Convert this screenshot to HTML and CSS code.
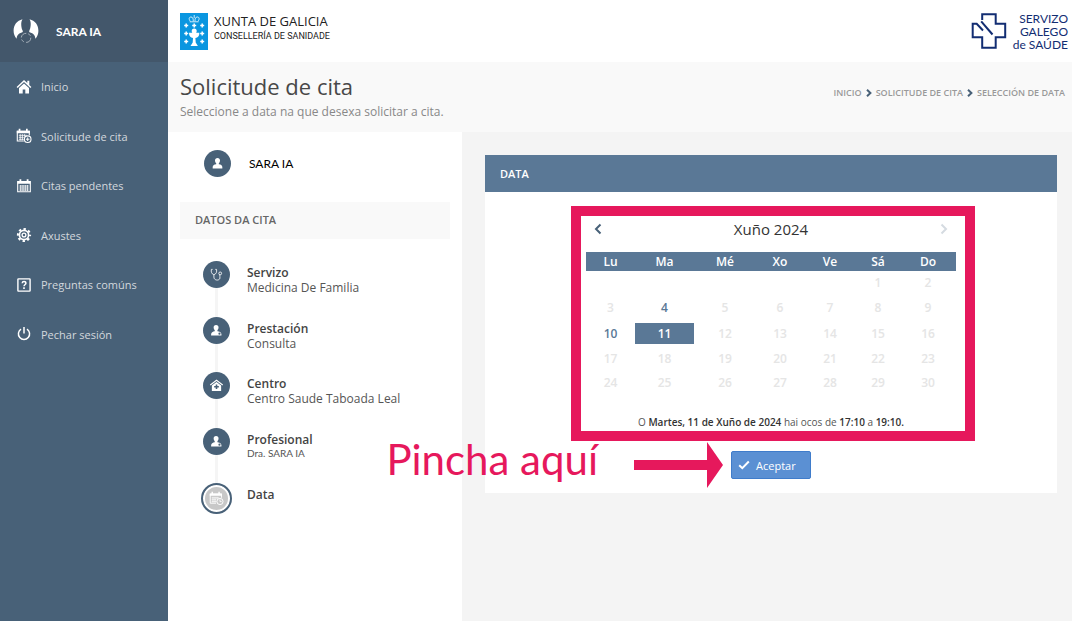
FILE: index.html
```html
<!DOCTYPE html>
<html lang="gl">
<head>
<meta charset="utf-8">
<meta name="viewport" content="width=device-width, initial-scale=1">
<title>Solicitude de cita</title>
<link rel="stylesheet" href="styles.css">
</head>
<body>
<svg class="defs" aria-hidden="true">
  <symbol id="i-person" viewBox="0 0 14 14"><path d="M7 1c1.700 0 2.700 1.200 2.700 2.800 0 1.200-.5 2.300-1.300 2.900v1.100c2.500.4 3.800 1.300 3.800 3.200v1.500H1.800V11c0-1.900 1.300-2.800 3.800-3.200V6.700C4.800 6.100 4.300 5 4.300 3.800 4.300 2.200 5.300 1 7 1z" fill="currentColor"/></symbol>
  <symbol id="i-doctor" viewBox="0 0 14 14"><path d="M6.500 1c1.800 0 2.800 1.200 2.700 2.900 0 1.200-.5 2.100-1.200 2.800v1.200c2 .3 4 1 4.300 3v1.600H1.200V11c.2-2 1.800-2.800 3.900-3.200V6.700C4.300 6 3.900 5 3.900 3.900 3.800 2.200 4.800 1 6.500 1z" fill="currentColor"/><circle cx="10.200" cy="10.400" r="1.200" fill="#486178"/></symbol>
  <symbol id="i-cal" viewBox="0 0 16 16"><path d="M1.700 3.500h12.600v10.300H1.700z" fill="none" stroke="currentColor" stroke-width="1.100"/><path d="M1.500 3.200h13v2.500h-13zM3.500 1.200h1.800v3H3.500zM10.700 1.200h1.800v3h-1.800z" fill="currentColor"/><path d="M3.400 8h9.200M3.400 10h9.200M3.400 12h9.200M4.700 7v6M7 7v6M9.300 7v6M11.600 7v6" fill="none" stroke="currentColor" stroke-width=".8"/></symbol>
  <symbol id="i-calplus" viewBox="0 0 16 16"><path d="M7.800 13H1.300V3.300h12v3.900" fill="none" stroke="currentColor" stroke-width="1.100"/><path d="M.8 2.700h13v2.600H.8zM2.700.8h1.700v3H2.700zM10 .8h1.700v3H10z" fill="currentColor"/><path d="M2.800 7.300h8M2.800 9.300h5M2.800 11.300h5M4.200 6.200v6M6.400 6.200v6M8.600 6.200v2.500" fill="none" stroke="currentColor" stroke-width=".8"/><circle cx="11.700" cy="11.200" r="3.300" fill="none" stroke="currentColor" stroke-width="1.100"/><path d="M11.700 9.400v3.600M9.900 11.200h3.600" stroke="currentColor"/></symbol>
  <symbol id="i-calclock" viewBox="0 0 16 16"><path d="M7.500 13H1.300V3.300h12v3.900" fill="none" stroke="currentColor"/><path d="M.8 2.700h13v2.300H.8zM2.700.8h1.500v3H2.700zM10 .8h1.500v3H10z" fill="currentColor"/><path d="M2.800 7.300h8M2.800 9.300h5M2.800 11.300h5M4.200 6.200v6M6.400 6.200v6M8.600 6.200v2.500" fill="none" stroke="currentColor" stroke-width=".7"/><circle cx="11.700" cy="11.200" r="3.300" fill="none" stroke="currentColor"/><path d="M11.700 9v2.300h1.800" fill="none" stroke="currentColor" stroke-width=".9"/></symbol>
</svg>
<div class="app">
  <aside class="sidebar">
    <div class="account">
      <svg class="avatar" viewBox="0 0 26 26"><path d="M9.500 1.200C4 2.500.5 7 .6 12.800c0 3.200 1 5.800 3 7.900.4-2.800 1.200-5 5.200-6.100.9-.3 1.200-1 .9-1.900C8.200 10 7.500 3.800 9.500 1.200zM16.500 1.200C22 2.500 25.500 7 25.400 12.800c0 3.200-1 5.800-3 7.900-.4-2.800-1.200-5-5.200-6.100-.9-.3-1.200-1-.9-1.900C17.800 10 18.500 3.800 16.500 1.200z" fill="#fff"/><path d="M8.300 19.500c.2-2.500 2.300-4.200 5-4.200M17.800 19.700c0 2.900-1.800 4.700-4.700 4.700M8.600 21.500c.5 1 1.200 1.700 2.200 2.300M15.200 15.800c1 .4 1.700 1 2.200 2" fill="none" stroke="#a5afb9" stroke-width="1"/></svg>
      <span>SARA IA</span>
    </div>
    <nav aria-label="Principal">
      <ul class="menu">
        <li><a href="#"><svg viewBox="0 0 16 16"><path d="M8 1 .6 8l1 1L8 3l6.400 6 1-1-2.100-2V1.800h-2v2.300z" fill="currentColor"/><path d="M8 4.400 3 9v5.400h3.700v-4h2.600v4H13V9z" fill="currentColor"/></svg>Inicio</a></li>
        <li><a href="#"><svg viewBox="0 0 16 16"><use href="#i-calplus"/></svg>Solicitude de cita</a></li>
        <li><a href="#"><svg viewBox="0 0 16 16"><use href="#i-cal"/></svg>Citas pendentes</a></li>
        <li><a href="#"><svg viewBox="0 0 16 16" fill="none" stroke="currentColor"><circle cx="8" cy="8" r="4.600" stroke-width="1.700"/><circle cx="8" cy="8" r="1.900" stroke-width="1.300"/><circle cx="8" cy="8" r="6.100" stroke-width="2" stroke-dasharray="2.400 2.390" stroke-dashoffset="1.200"/></svg>Axustes</a></li>
        <li><a href="#"><svg viewBox="0 0 16 16" fill="none" stroke="currentColor"><rect x="1.900" y="1.900" width="12.200" height="12.200" rx=".6" stroke-width="1.400"/><path d="M6.200 6.300C6.300 5 7 4.500 8 4.500s1.900.6 1.900 1.700C9.900 7.500 8 7.500 8 9.300" stroke-width="1.500"/><path d="M8 10.300v1.600" stroke-width="1.600"/></svg>Preguntas comúns</a></li>
        <li><a href="#"><svg viewBox="0 0 16 16" fill="none" stroke="currentColor" stroke-width="1.500"><path d="M5 3.100a5.600 5.600 0 1 0 6 0M8 1v6.500"/></svg>Pechar sesión</a></li>
      </ul>
    </nav>
  </aside>
  <div class="main">
    <header class="topbar">
      <div class="xunta">
        <svg class="shield" viewBox="0 0 28 37"><rect width="28" height="37" fill="#0a96e0"/><g fill="none" stroke="#fff" stroke-width=".8"><path d="M10.300 8.300C8.500 6 9 4 11 4c1.700 0 2.300 1.300 2.300 4.300M18 8.300c1.800-2.300 1.300-4.300-.7-4.300-1.700 0-2.300 1.300-2.300 4.300M9.700 8.800h8.900M14.200 2v3"/></g><g stroke="#fff" stroke-width="1.500"><path d="M4.200 12.500h4M6.200 10.500v4M20.200 12.500h4M22.200 10.500v4M12.200 12.500h4M14.200 10.500v4M4.200 20.500h4M6.200 18.500v4M20.200 20.500h4M22.200 18.500v4M4.200 28.500h4M6.200 26.500v4M20.200 28.500h4M22.200 26.500v4"/></g><circle cx="14.200" cy="18" r="2.500" fill="#fff"/><path d="M9 19.700h10.400c0 3.300-1.500 4.800-4 5.300l.3 4.500 2.200 3.500h-7.400l2.200-3.500.3-4.500c-2.500-.5-4-2-4-5.300z" fill="#fff"/></svg>
        <div>
          <div class="xunta-name">XUNTA DE GALICIA</div>
          <div class="xunta-dept">CONSELLERÍA DE SANIDADE</div>
        </div>
      </div>
      <div class="sergas">
        <svg class="cross" viewBox="0 0 36 38" fill="none" stroke="#122d72" stroke-width="2"><path d="M11.200 8V2.200h13.500v9.600h9.500v13.400h-9.500v10.600H11.200V25.200H1.700V11.800h4l6.300 6.700"/><path d="M10.200 9.300 21.500 22.500"/></svg>
        <div class="sergas-name">SERVIZO<br>GALEGO<br>de SAÚDE</div>
      </div>
    </header>
    <section class="pagehead">
      <div>
        <h1>Solicitude de cita</h1>
        <p>Seleccione a data na que desexa solicitar a cita.</p>
      </div>
      <nav class="crumbs" aria-label="Ruta">
        <a href="#">INICIO</a>
        <svg viewBox="0 0 6 8"><path d="M1 .8 4.400 4 1 7.200"/></svg>
        <a href="#">SOLICITUDE DE CITA</a>
        <svg viewBox="0 0 6 8"><path d="M1 .8 4.400 4 1 7.200"/></svg>
        <a href="#">SELECCIÓN DE DATA</a>
      </nav>
    </section>
    <div class="columns">
      <section class="summary">
        <div class="patient">
          <span class="dot"><svg viewBox="0 0 14 14"><use href="#i-person"/></svg></span>
          <span>SARA IA</span>
        </div>
        <h2>DATOS DA CITA</h2>
        <ol class="steps">
          <li><span class="dot"><svg viewBox="0 0 14 14" fill="none" stroke="currentColor" stroke-width=".9"><path d="M2.800 1.500H1.500c-.5 2.500 0 4.800 2.700 5.800C7 6.300 7.500 4 7 1.500H5.700M4.200 7.300v2.500c0 3.800 5.800 4.200 6.500 1.200.2-1.400-.3-2.300-.2-4"/><circle cx="11" cy="5.800" r="1.500"/></svg></span><div><h3>Servizo</h3><p>Medicina De Familia</p></div></li>
          <li><span class="dot"><svg viewBox="0 0 14 14"><use href="#i-doctor"/></svg></span><div><h3>Prestación</h3><p>Consulta</p></div></li>
          <li><span class="dot"><svg viewBox="0 0 14 14"><path d="M7 .6-.1 6l.8 1L7 2.200 13.300 7l.8-1z" fill="currentColor"/><path d="M7 3.200 2 7v6h10V7z" fill="currentColor"/><path d="M7 5.900v5M4.500 8.400h5" stroke="#486178" stroke-width="1.700"/></svg></span><div><h3>Centro</h3><p>Centro Saude Taboada Leal</p></div></li>
          <li><span class="dot"><svg viewBox="0 0 14 14"><use href="#i-doctor"/></svg></span><div><h3>Profesional</h3><p class="staff">Dra. SARA IA</p></div></li>
          <li><span class="dot current"><svg viewBox="0 0 16 16"><use href="#i-calclock"/></svg></span><div><h3>Data</h3></div></li>
        </ol>
      </section>
      <main class="content">
        <section class="card">
          <h2>DATA</h2>
          <div class="card-body">
            <div class="calendar">
              <div class="month">
                <button type="button" aria-label="Mes anterior"><svg viewBox="0 0 8 12"><path d="M6.500 1.500 2 6l4.500 4.500"/></svg></button>
                <span>Xuño 2024</span>
                <button type="button" disabled aria-label="Mes seguinte"><svg viewBox="0 0 8 12"><path d="M1.500 1.500 6 6l-4.500 4.500"/></svg></button>
              </div>
              <table>
                <colgroup><col class="c-lu"><col class="c-ma"><col class="c-me"><col class="c-xo"><col class="c-ve"><col class="c-sa"><col class="c-do"></colgroup>
                <thead><tr><th>Lu</th><th>Ma</th><th>Mé</th><th>Xo</th><th>Ve</th><th>Sá</th><th>Do</th></tr></thead>
                <tbody>
                  <tr><td></td><td></td><td></td><td></td><td></td><td>1</td><td>2</td></tr>
                  <tr><td>3</td><td><button type="button">4</button></td><td>5</td><td>6</td><td>7</td><td>8</td><td>9</td></tr>
                  <tr><td><button type="button">10</button></td><td><button type="button" class="selected" aria-pressed="true">11</button></td><td>12</td><td>13</td><td>14</td><td>15</td><td>16</td></tr>
                  <tr><td>17</td><td>18</td><td>19</td><td>20</td><td>21</td><td>22</td><td>23</td></tr>
                  <tr><td>24</td><td>25</td><td>26</td><td>27</td><td>28</td><td>29</td><td>30</td></tr>
                </tbody>
              </table>
              <p class="slots">O <b>Martes, 11 de Xuño de 2024</b> hai ocos de <b>17:10</b> a <b>19:10.</b></p>
              <div class="frame"></div>
            </div>
            <div class="action">
              <button type="button" class="accept"><svg viewBox="0 0 12 10"><path d="M1.200 5.200 4.300 8.200 10.800 1.500"/></svg>Aceptar</button>
              <div class="hint">
                <span>Pincha aquí</span>
                <svg viewBox="0 0 89 46"><path d="M0 18h73V0l16 23-16 23V28H0z" fill="#e6185c"/></svg>
              </div>
            </div>
          </div>
        </section>
      </main>
    </div>
  </div>
</div>
</body>
</html>
```

FILE: styles.css
```css
* { box-sizing: border-box; }
body, h1, h2, h3, p, ul, ol { margin: 0; padding: 0; }
ul, ol { list-style: none; }
body { font-family: "Open Sans", "Noto Sans", sans-serif; font-size: 12px; color: #555; background: #f4f4f4; }
a { color: inherit; text-decoration: none; }
button { font: inherit; color: inherit; border: 0; padding: 0; background: none; cursor: pointer; }
svg { display: block; flex: none; }
.defs { position: absolute; width: 0; height: 0; }

.app { display: flex; min-height: 100vh; }
.sidebar { width: 168px; flex: none; background: #486178; color: #d3d8dd; }
.account { height: 62px; display: flex; align-items: center; gap: 17px; padding-left: 13px; background: #43576b; color: #fff; font: 700 12px Lato, sans-serif; }
.avatar { width: 26px; height: 26px; }
.menu { display: grid; grid-auto-rows: 1fr; min-height: 297px; }
.menu a { height: 100%; display: flex; align-items: center; gap: 9px; padding-left: 16px; font-size: 11px; }
.menu svg { width: 16px; height: 16px; color: #fff; }

.main { flex: 1; min-width: 0; display: flex; flex-direction: column; }
.topbar { height: 62px; display: flex; justify-content: space-between; align-items: center; padding: 0 4px 0 12px; background: #fff; }
.xunta, .sergas { display: flex; gap: 6px; }
.shield { width: 28px; height: 37px; }
.xunta-name { font: 500 13px/16px "Open Sans", sans-serif; color: #222; }
.xunta-dept { font: 9px/14px Roboto, sans-serif; color: #222; }
.sergas { color: #122d72; }
.cross { width: 36px; height: 38px; }
.sergas-name { font: 12px/13px Lato, sans-serif; text-align: right; }

.pagehead { height: 70px; display: flex; justify-content: space-between; padding: 9px 7px 0 12px; background: #f9f9f9; }
.pagehead h1 { font-size: 22px; line-height: 30px; font-weight: 400; color: #484848; }
.pagehead p { font-size: 12px; line-height: 22px; color: #888; }
.crumbs { display: flex; align-items: center; gap: 4px; height: 43px; font-size: 9px; font-weight: 600; color: #999; }
.crumbs svg { width: 6px; height: 8px; fill: none; stroke: #486178; stroke-width: 2; }

.columns { flex: 1; display: flex; }
.summary { width: 294px; flex: none; padding: 0 12px; background: #fff; }
.patient { display: flex; align-items: center; gap: 18px; height: 62px; padding-left: 24px; margin-bottom: 8px; font: 12px Lato, sans-serif; color: #000; }
.dot { position: relative; display: grid; place-items: center; width: 27px; height: 27px; flex: none; border-radius: 50%; background: #486178; color: #fff; }
.dot svg { width: 13px; height: 13px; }
.summary h2 { height: 37px; padding-left: 15px; background: #f9f9f9; font-size: 11px; line-height: 36px; font-weight: 600; color: #666; }
.steps { display: grid; grid-auto-rows: 1fr; min-height: 278px; margin: 22px 0 0 23px; }
.steps li { display: flex; gap: 17px; position: relative; }
.steps li:not(:last-child)::before { content: ""; position: absolute; left: 12px; top: 0; bottom: 0; width: 3px; background: #f5f5f5; }
.steps h3 { margin-top: 4px; font-size: 12px; line-height: 15px; font-weight: 600; color: #444; }
.steps p { line-height: 15px; }
.steps .staff { font: 10px/13px Lato, sans-serif; }
.dot.current { width: 31px; height: 31px; margin: 0 -2px; border: 2px solid #486178; background: #c8c8c8; box-shadow: inset 0 0 0 2px #fff; }
.dot.current svg { width: 15px; height: 15px; }

.content { flex: 1; min-width: 0; padding: 23px 15px 23px 23px; }
.card { background: #fff; }
.card h2 { height: 37px; padding-left: 15px; background: #5a7896; color: #fff; font-size: 11px; line-height: 38px; font-weight: 600; }
.card-body { padding: 24px 0 14px; }
.calendar { position: relative; width: 370px; margin: 0 auto; }
.month { display: flex; justify-content: space-between; align-items: center; height: 26px; padding: 0 8px; margin-bottom: 10px; font-size: 15px; font-weight: 500; color: #333; }
.month svg { width: 8px; height: 12px; fill: none; stroke: #486178; stroke-width: 2; }
.month button:disabled svg { stroke: #d5dbe1; }
table { width: 100%; height: 142px; border-collapse: collapse; table-layout: fixed; text-align: center; }
.c-lu { width: 49px; } .c-ma { width: 59px; } .c-me { width: 62px; } .c-xo { width: 48px; }
.c-ve { width: 52px; } .c-sa { width: 44px; } .c-do { width: 56px; }
th, td { padding: 0; line-height: 19px; font-weight: 600; }
th { height: 19px; background: #5a7896; color: #fff; }
td { color: #e5e5e5; }
td button { display: block; width: 100%; line-height: 21px; color: #5a7896; font-weight: 600; }
td .selected { background: #5a7896; color: #fff; }
.slots { margin-top: 21px; font-size: 10px; line-height: 14px; text-align: center; color: #555; }
.slots b { font-weight: 600; color: #333; }
.frame { position: absolute; inset: -10px -19px -12px -15px; border: 10px solid #e6185c; pointer-events: none; }
.action { position: relative; width: 80px; margin: 22px auto 0; }
.accept { display: flex; align-items: center; gap: 6px; width: 100%; height: 28px; padding-left: 6px; border: 1px solid #3f7ccb; border-radius: 2px; background: #5b90d3; color: #fff; font-size: 11px; font-weight: 500; }
.accept svg { width: 12px; height: 10px; fill: none; stroke: #fff; stroke-width: 2; }
.hint { position: absolute; right: 100%; top: 50%; translate: -8px -50%; display: flex; align-items: flex-start; gap: 36px; color: #e6185c; font: 42px/34px Lato, sans-serif; white-space: nowrap; pointer-events: none; }
.hint svg { width: 89px; height: 46px; }
```
